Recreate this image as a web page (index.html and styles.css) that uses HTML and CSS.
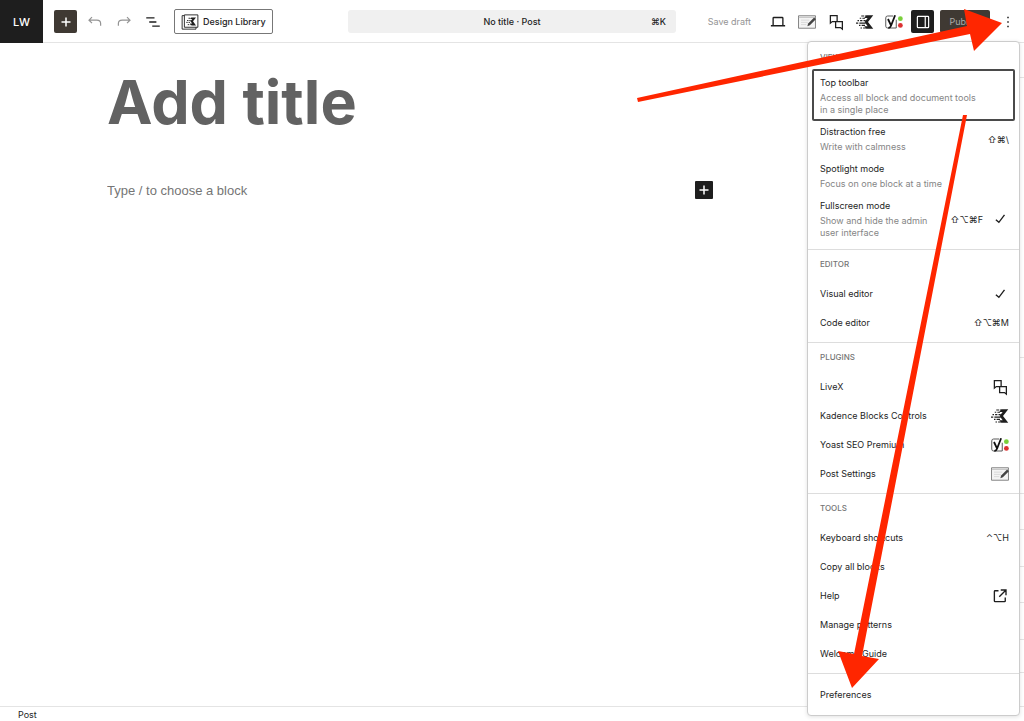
FILE: index.html
```html
<!DOCTYPE html>
<html lang="en">
<head>
    <meta charset="UTF-8">
    <meta name="viewport" content="width=device-width, initial-scale=1.0">
    <title>Add New Post</title>
    <link rel="stylesheet" href="styles.css">
</head>
<body>
    <!-- Shared icons -->
    <svg class="sprite" aria-hidden="true">
        <symbol id="icon-check" viewBox="0 0 24 24">
            <path d="M18 6.500 10.500 16.500 6.500 13" fill="none" stroke="currentColor" stroke-width="1.800"/>
        </symbol>
        <symbol id="icon-plus" viewBox="0 0 24 24">
            <path d="M12 6v12M6 12h12" stroke="currentColor" stroke-width="2"/>
        </symbol>
        <symbol id="icon-livex" viewBox="0 0 24 24">
            <path d="M4.500 3.500h9v8H7l-2.500 2zM11.500 11.500h9v10l-2.500-2h-6.500z" fill="none" stroke="currentColor" stroke-width="1.700"/>
        </symbol>
        <symbol id="icon-kadence" viewBox="0 0 24 24">
            <path d="M14 3h9l-7 9 7 9h-9l-3-3.500h4.500L11.500 12l4-5.500H11z" fill="currentColor"/>
            <path d="M7 4h4M12 4h2M5 7h2M8.500 7H12M2 10.200h2M5.500 10.200h3M10 10.200h3M0 13.400h3M4.500 13.400H13M4 16.600h2M7.500 16.600H12M6 20h2M9.500 20H14" stroke="currentColor" stroke-width="1.600"/>
        </symbol>
        <symbol id="icon-yoast" viewBox="0 0 24 24">
            <path d="M11 4H3.500Q1 4 1 6.500v11Q1 20 3.500 20H15V9" fill="none" stroke="#555" stroke-width="1.300"/>
            <path d="M4 8l4 8.500M13.500 3 8 17q-1 2.800-3.500 3" fill="none" stroke="#111" stroke-width="2.400"/>
            <circle cx="20.500" cy="7.500" r="3.200" fill="#7ad03a"/>
            <circle cx="20.500" cy="16.500" r="3.200" fill="#dc3232"/>
        </symbol>
        <symbol id="icon-post" viewBox="0 0 24 24">
            <path d="M.7 3.700h22.600v16.600H.7z" fill="#f4f4f4" stroke="#777" stroke-width="1.200"/>
            <path d="M1 6h22" stroke="#bbb"/>
            <path d="M4 9.500h11M4 12.500h9M4 15.500h7" stroke="#d0d0d0"/>
            <path d="m12.500 17.500 1-3.500 8-8 2.300 2.200-8 8z" fill="#444"/>
        </symbol>
    </svg>

    <div class="editor">
        <header class="topbar">
            <div class="topbar-left">
                <a class="site-hub" href="#">LW</a>
                <div class="tools">
                    <button class="tool tool-insert" type="button" aria-label="Toggle block inserter"><svg class="icon"><use href="#icon-plus"/></svg></button>
                    <button class="tool tool-muted" type="button" aria-label="Undo">
                        <svg class="icon" viewBox="0 0 24 24" fill="none" stroke="currentColor" stroke-width="1.600"><path d="M8 5.500 4 9.500l4 4M4 9.500h10.500q5 0 5 4.500v3"/></svg>
                    </button>
                    <button class="tool tool-muted" type="button" aria-label="Redo">
                        <svg class="icon" viewBox="0 0 24 24" fill="none" stroke="currentColor" stroke-width="1.600"><path d="m16 5.500 4 4-4 4M20 9.500H9.500q-5 0-5 4.500v3"/></svg>
                    </button>
                    <button class="tool" type="button" aria-label="Document overview">
                        <svg class="icon" viewBox="0 0 24 24" stroke="currentColor" stroke-width="1.800"><path d="M3 6.500h11M7 12h9.500M11 17.500h10"/></svg>
                    </button>
                </div>
                <button class="library-btn" type="button">
                    <svg class="icon" viewBox="0 0 24 24" aria-hidden="true">
                        <path d="M4 3.500H1.500v18H20V19M4.500 2.500h18V19h-18z" fill="none" stroke="currentColor" stroke-width="1.200"/>
                        <path d="M14 6h6l-4 5 4 5.500h-6l-2-2.500h3l-2.500-3 2.500-3h-3z" fill="currentColor"/>
                        <path d="M10 7h4M8 10h5M7 12.500h6M9 15.500h4" stroke="currentColor" stroke-width="1.200" stroke-dasharray="2 1"/>
                    </svg>
                    Design Library
                </button>
            </div>

            <button class="command-bar" type="button">
                <span class="command-title">No title · Post</span>
                <span class="keys">⌘K</span>
            </button>

            <div class="topbar-right">
                <button class="save-btn" type="button">Save draft</button>
                <button class="tool" type="button" aria-label="View">
                    <svg class="icon" viewBox="0 0 24 24" fill="none" stroke="currentColor" stroke-width="1.800"><path d="M5.500 16V7q0-1 1-1h11q1 0 1 1v9M2.500 17h19"/></svg>
                </button>
                <button class="tool" type="button" aria-label="Post Settings"><svg class="icon"><use href="#icon-post"/></svg></button>
                <button class="tool" type="button" aria-label="LiveX"><svg class="icon"><use href="#icon-livex"/></svg></button>
                <button class="tool" type="button" aria-label="Kadence Blocks Controls"><svg class="icon"><use href="#icon-kadence"/></svg></button>
                <button class="tool" type="button" aria-label="Yoast SEO Premium"><svg class="icon"><use href="#icon-yoast"/></svg></button>
                <button class="tool tool-active" type="button" aria-label="Settings">
                    <svg class="icon" viewBox="0 0 24 24" fill="none" stroke="currentColor" stroke-width="1.600"><rect x="4.500" y="4.500" width="15" height="15" rx="1"/><path d="M15 5v14"/></svg>
                </button>
                <button class="publish-btn" type="button">Publish</button>
                <button class="tool" type="button" aria-label="Options">
                    <svg class="icon" viewBox="0 0 24 24" fill="currentColor"><path d="M11 5h2v2h-2zM11 11h2v2h-2zM11 17h2v2h-2z"/></svg>
                </button>
            </div>
        </header>

        <div class="workspace">
            <main class="canvas">
                <div class="post">
                    <input class="post-title" type="text" placeholder="Add title" aria-label="Add title">
                    <div class="post-block">
                        <input class="block-input" type="text" placeholder="Type / to choose a block" aria-label="Block content">
                        <button class="block-add" type="button" aria-label="Add block"><svg class="icon"><use href="#icon-plus"/></svg></button>
                    </div>
                </div>
            </main>
            <aside class="sidebar" aria-label="Settings">
                <div class="panel"></div>
                <div class="panel"></div>
                <div class="panel"></div>
                <div class="panel"></div>
                <div class="panel"></div>
                <div class="panel"></div>
                <div class="panel"></div>
                <div class="panel"></div>
            </aside>
        </div>

        <footer class="breadcrumb">Post</footer>

        <!-- Options menu -->
        <div class="menu" aria-label="Options">
            <section class="menu-group">
                <h2>View</h2>
                <button class="menu-item menu-item-info is-focused" type="button">
                    <span class="item-text">Top toolbar <small>Access all block and document tools in a single place</small></span>
                </button>
                <button class="menu-item menu-item-info" type="button">
                    <span class="item-text">Distraction free <small>Write with calmness</small></span>
                    <span class="keys">⇧⌘\</span>
                </button>
                <button class="menu-item menu-item-info" type="button">
                    <span class="item-text">Spotlight mode <small>Focus on one block at a time</small></span>
                </button>
                <button class="menu-item menu-item-info" type="button">
                    <span class="item-text">Fullscreen mode <small>Show and hide the admin user interface</small></span>
                    <span class="keys">⇧⌥⌘F</span>
                    <svg class="icon"><use href="#icon-check"/></svg>
                </button>
            </section>
            <section class="menu-group">
                <h2>Editor</h2>
                <button class="menu-item" type="button">Visual editor <svg class="icon"><use href="#icon-check"/></svg></button>
                <button class="menu-item" type="button">Code editor <span class="keys">⇧⌥⌘M</span></button>
            </section>
            <section class="menu-group">
                <h2>Plugins</h2>
                <button class="menu-item" type="button">LiveX <svg class="icon"><use href="#icon-livex"/></svg></button>
                <button class="menu-item" type="button">Kadence Blocks Controls <svg class="icon"><use href="#icon-kadence"/></svg></button>
                <button class="menu-item" type="button">Yoast SEO Premium <svg class="icon"><use href="#icon-yoast"/></svg></button>
                <button class="menu-item" type="button">Post Settings <svg class="icon"><use href="#icon-post"/></svg></button>
            </section>
            <section class="menu-group">
                <h2>Tools</h2>
                <button class="menu-item" type="button">Keyboard shortcuts <span class="keys">⌃⌥H</span></button>
                <button class="menu-item" type="button">Copy all blocks</button>
                <a class="menu-item" href="#">Help
                    <svg class="icon" viewBox="0 0 24 24" fill="none" stroke="currentColor" stroke-width="1.800"><path d="M10 5H5.500Q4.500 5 4.500 6v12.500q0 1 1 1H18q1 0 1-1V14M13 4h7v7M20 4l-9 9"/></svg>
                </a>
                <button class="menu-item" type="button">Manage patterns</button>
                <button class="menu-item" type="button">Welcome Guide</button>
            </section>
            <section class="menu-group">
                <button class="menu-item" type="button">Preferences</button>
            </section>
        </div>

        <!-- Arrows pointing at the options button and at Preferences -->
        <svg class="arrows" viewBox="0 0 424 721" aria-hidden="true">
            <path d="M37 98 367 26 364 9l38 14-28 28-4-17L38 102z"/>
            <path d="M363 115h4L262 656l17 3-27 29-14-37 16 3z"/>
        </svg>
    </div>
</body>
</html>
```
FILE: styles.css
```css
/* Reset and Base Styles */
* {
    margin: 0;
    padding: 0;
    box-sizing: border-box;
}

body {
    font-family: Inter, "Liberation Sans", "DejaVu Sans", sans-serif;
    font-size: 9px;
    color: #1e1e1e;
    background: #fff;
}

button,
input {
    font: inherit;
    color: inherit;
    background: none;
    border: none;
}

button {
    cursor: pointer;
}

a {
    color: inherit;
    text-decoration: none;
}

.sprite {
    display: none;
}

.icon {
    width: 18px;
    height: 18px;
    flex: none;
}

.keys {
    font-family: Inter, "DejaVu Sans", sans-serif;
}

.editor {
    position: relative;
    display: flex;
    flex-direction: column;
    height: 100vh;
    overflow: hidden;
}

/* Top bar */
.topbar {
    display: grid;
    grid-template-columns: 1fr minmax(0, 328px) 1fr;
    align-items: center;
    height: 43px;
    border-bottom: 1px solid #e4e4e4;
}

.topbar-left,
.topbar-right,
.tools {
    display: flex;
    align-items: center;
}

.site-hub {
    display: flex;
    align-items: center;
    justify-content: center;
    width: 43px;
    height: 43px;
    margin-right: 11px;
    background: #1e1e1e;
    color: #fff;
    font-size: 11px;
    font-weight: 500;
}

.tools,
.topbar-right {
    gap: 6px;
}

.tool {
    display: flex;
    align-items: center;
    justify-content: center;
    width: 23px;
    height: 23px;
    border-radius: 2px;
}

.tool-insert {
    background: #3f3933;
    color: #fff;
}

.tool-muted {
    color: #949494;
}

.tool-active {
    background: #1e1e1e;
    color: #fff;
}

.library-btn {
    display: flex;
    align-items: center;
    gap: 4px;
    height: 25px;
    margin-left: 10px;
    padding: 0 6px;
    border: 1px solid #777;
    border-radius: 2px;
    font-weight: 500;
    white-space: nowrap;
}

.command-bar {
    display: grid;
    grid-template-columns: 1fr auto 1fr;
    align-items: center;
    height: 23px;
    padding: 0 10px;
    background: #f0f0f0;
    border-radius: 3px;
    font-weight: 500;
}

.command-title {
    grid-column: 2;
}

.command-bar .keys {
    text-align: right;
}

.topbar-right {
    justify-content: flex-end;
    padding-right: 5px;
}

.save-btn {
    margin-right: 9px;
    color: #949494;
    white-space: nowrap;
}

.publish-btn {
    width: 50px;
    height: 23px;
    background: #3f3933;
    color: #aaa;
    border-radius: 2px;
}

/* Canvas */
.workspace {
    flex: 1;
    display: flex;
    min-height: 0;
}

.canvas {
    flex: 1;
    padding: 23px 20px;
}

.post {
    max-width: 606px;
    margin: 0 auto;
}

.post-title {
    display: block;
    width: 100%;
    height: 72px;
    font-size: 61px;
    font-weight: 700;
}

.post-title::placeholder {
    color: #626262;
    opacity: 1;
}

.post-block {
    display: flex;
    align-items: center;
    margin-top: 42px;
}

.block-input {
    flex: 1;
    height: 20px;
    font-family: "Liberation Sans", Arial, sans-serif;
    font-size: 13px;
}

.block-input::placeholder {
    color: #757575;
    opacity: 1;
}

.block-add {
    display: flex;
    align-items: center;
    justify-content: center;
    width: 18px;
    height: 18px;
    background: #1e1e1e;
    color: #fff;
    border-radius: 1px;
}

.sidebar {
    display: grid;
    grid-template-rows: 35px 280px 136px 36px 37px 36px 37px 33px;
    width: 204px;
    border-left: 1px solid #e4e4e4;
}

.panel {
    border-bottom: 1px solid #e4e4e4;
}

.breadcrumb {
    height: 15px;
    padding: 2px 18px 0;
    border-top: 1px solid #e4e4e4;
    line-height: 12px;
}

/* Options menu */
.menu {
    position: absolute;
    top: 41px;
    right: 4px;
    width: 213px;
    padding-top: 1px;
    background: #fff;
    border: 1px solid #ccc;
    border-radius: 4px;
    box-shadow: 0 1px 4px rgba(0, 0, 0, 0.12);
}

.menu-group {
    padding: 5px 4px;
    border-bottom: 1px solid #ddd;
}

.menu-group:last-child {
    padding: 6px 4px;
    border-bottom: none;
}

.menu-group h2 {
    height: 24px;
    padding: 0 8px;
    color: #757575;
    font-size: 8px;
    font-weight: 500;
    line-height: 19px;
    text-transform: uppercase;
}

.menu-item {
    display: flex;
    align-items: center;
    justify-content: space-between;
    gap: 8px;
    width: 100%;
    min-height: 29px;
    padding: 0 6px 0 8px;
    border-radius: 2px;
    text-align: left;
}

.menu-item-info {
    padding-top: 4px;
    padding-bottom: 5px;
    line-height: 13px;
}

.item-text {
    flex: 1;
    max-width: 160px;
}

.item-text small {
    display: block;
    margin-top: 3px;
    color: #858585;
    font-size: 9px;
    line-height: 12px;
}

.is-focused {
    margin-top: -3px;
    padding-top: 7px;
    box-shadow: inset 0 0 0 2px #4a4a4a;
}

/* Arrows */
.arrows {
    position: absolute;
    top: 0;
    right: 0;
    width: 424px;
    height: 721px;
    fill: #ff2600;
    pointer-events: none;
}
```
